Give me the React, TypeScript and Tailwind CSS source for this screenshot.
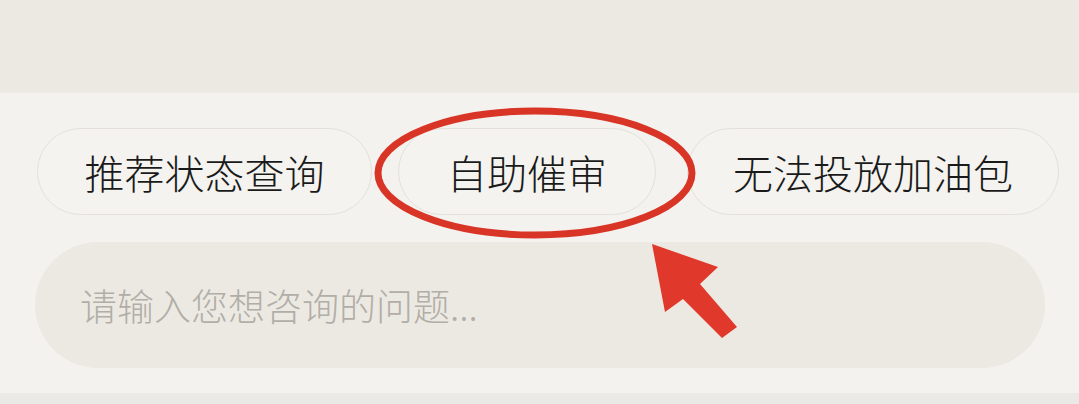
import React from 'react'

const quickReplies = [
  { label: '推荐状态查询', w: 'w-[335px]', ml: '' },
  { label: '自助催审', w: 'w-[258px]', ml: 'ml-[26px]' },
  { label: '无法投放加油包', w: 'w-[372px]', ml: 'ml-[31px]' },
]

export default function App() {
  return (
    <div
      className="relative w-[1079px] h-[404px] overflow-hidden bg-[#f3f2ee]"
      style={{ fontFamily: '"Noto Sans CJK SC", "Noto Sans", sans-serif' }}
    >
      {/* upper chat area */}
      <div className="h-[93px] bg-[#ece9e3]" />

      {/* quick reply pills */}
      <div className="flex pt-[35px] pl-[37px]">
        {quickReplies.map(q => (
          <button
            key={q.label}
            className={`${q.w} ${q.ml} h-[87px] shrink-0 rounded-full border border-[#e4e1db] bg-[#f4f3ef] flex items-center justify-center text-[40px] font-light leading-none text-[#1a1a1a]`}
          >
            {q.label}
          </button>
        ))}
      </div>

      {/* input */}
      <div className="mt-[27px] ml-[35px] w-[1010px] h-[126px] rounded-full bg-[#ece9e3] flex items-center pl-[45px]">
        <span className="text-[37px] font-light leading-none text-[#b2aea7]">请输入您想咨询的问题...</span>
      </div>

      {/* bottom strip */}
      <div className="mt-[25px] h-[11px] bg-[#ebe9e5]" />

      {/* annotation */}
      <svg className="absolute inset-0 pointer-events-none" width="1079" height="404" viewBox="0 0 1079 404">
        <ellipse cx="535" cy="173" rx="157" ry="62" fill="none" stroke="#d93527" strokeWidth="7" />
        <polygon
          points="652,244 718,267 700,284 737,327 722,338 683,299 665,312"
          fill="#e0382a"
        />
      </svg>
    </div>
  )
}
